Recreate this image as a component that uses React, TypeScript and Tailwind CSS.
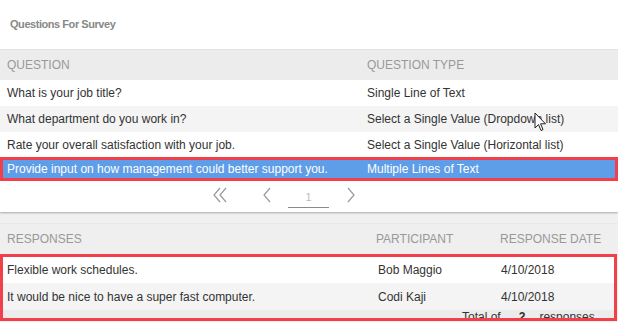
import { ReactNode } from "react";

const questions = [
  { q: "What is your job title?", type: "Single Line of Text" },
  { q: "What department do you work in?", type: "Select a Single Value (Dropdown list)" },
  { q: "Rate your overall satisfaction with your job.", type: "Select a Single Value (Horizontal list)" },
];

const responses = [
  { text: "Flexible work schedules.", who: "Bob Maggio", date: "4/10/2018" },
  { text: "It would be nice to have a super fast computer.", who: "Codi Kaji", date: "4/10/2018" },
];

function Chevron({ d, w = 10 }: { d: string; w?: number }) {
  return (
    <svg width={w} height="16" viewBox={`0 0 ${w} 16`} fill="none" stroke="#9a9a9a" strokeWidth="1.2">
      <path d={d} />
    </svg>
  );
}

function QRow({ children, alt, h }: { children: ReactNode; alt?: boolean; h: string }) {
  return (
    <div className={`${h} grid grid-cols-[360px_1fr] items-center pl-[7px] text-[#333] ${alt ? "bg-[#f4f4f4]" : "bg-white"}`}>
      {children}
    </div>
  );
}

export default function App() {
  return (
    <div className="relative w-[618px] h-[322px] overflow-hidden bg-[#f0f0f0] font-['Liberation_Sans',Arial,sans-serif] text-[12px] leading-none">
      {/* Questions panel */}
      <div className="bg-white shadow-[0_1px_2px_rgba(0,0,0,0.3)]">
        <div className="h-[50px] flex items-center pl-[10px] pb-[1px] font-bold text-[#888] border-b border-[#e2e2e2] text-[11px] tracking-[-0.45px]">
          Questions For Survey
        </div>
        <div className="h-[30px] grid grid-cols-[360px_1fr] items-center pl-[7px] bg-[#ececec] text-[#999]">
          <span>QUESTION</span>
          <span>QUESTION TYPE</span>
        </div>
        <QRow h="h-[26px]">
          <span>{questions[0].q}</span>
          <span>{questions[0].type}</span>
        </QRow>
        <QRow h="h-[26px]" alt>
          <span>{questions[1].q}</span>
          <span>{questions[1].type}</span>
        </QRow>
        <QRow h="h-[25px]">
          <span>{questions[2].q}</span>
          <span>{questions[2].type}</span>
        </QRow>
        <div className="h-[24px] border-[3px] border-[#f1404a] bg-[#5e9de8] grid grid-cols-[360px_1fr] items-center pl-[4px] text-white">
          <span>Provide input on how management could better support you.</span>
          <span>Multiple Lines of Text</span>
        </div>
        {/* Pagination */}
        <div className="h-[31px] flex items-start pt-[6px]">
          <div className="ml-[212px] flex">
            <Chevron w={16} d="M8 1 L2 8 L8 15 M14 1 L8 8 L14 15" />
          </div>
          <div className="ml-[34px] flex">
            <Chevron d="M8 1 L2 8 L8 15" />
          </div>
          <div className="ml-[16px] w-[41px] h-[21px] flex justify-center items-center border-b border-[#8a8a8a] text-[#bbb] text-[11px]">
            1
          </div>
          <div className="ml-[17px] flex">
            <Chevron d="M2 1 L8 8 L2 15" />
          </div>
        </div>
      </div>

      {/* Responses */}
      <div className="mt-[11px] border-t border-[#e8e8e8]">
        <div className="h-[30px] grid grid-cols-[369px_124px_1fr] items-center pl-[7px] text-[#999] bg-[#efefef]">
          <span>RESPONSES</span>
          <span>PARTICIPANT</span>
          <span>RESPONSE DATE</span>
        </div>
        <div className="w-[617px] h-[67px] border-[3px] border-[#f1404a] overflow-hidden flex flex-col">
          {responses.map((r, i) => (
            <div
              key={i}
              className={`${i === 0 ? "h-[26px] bg-white" : "h-[27px] bg-[#f4f4f4]"} shrink-0 grid grid-cols-[371px_123px_1fr] items-center pl-[4px] text-[#333]`}
            >
              <span>{r.text}</span>
              <span>{r.who}</span>
              <span>{r.date}</span>
            </div>
          ))}
          <div className="h-[20px] shrink-0 bg-[#ececec] flex items-start pt-[1px] pl-[459px] text-[#333]">
            <span>Total of</span>
            <span className="ml-[18px] font-bold">2</span>
            <span className="ml-[14px]">responses</span>
          </div>
        </div>
      </div>

      {/* Mouse cursor */}
      <svg className="absolute left-[534px] top-[112px]" width="13" height="20" viewBox="0 0 13 20">
        <path d="M1 1 L1 16 L4.5 12.5 L7 18.5 L9 17.6 L6.6 11.8 L11.5 11.8 Z" fill="white" stroke="#222" strokeWidth="1" strokeLinejoin="round" />
      </svg>
    </div>
  );
}
